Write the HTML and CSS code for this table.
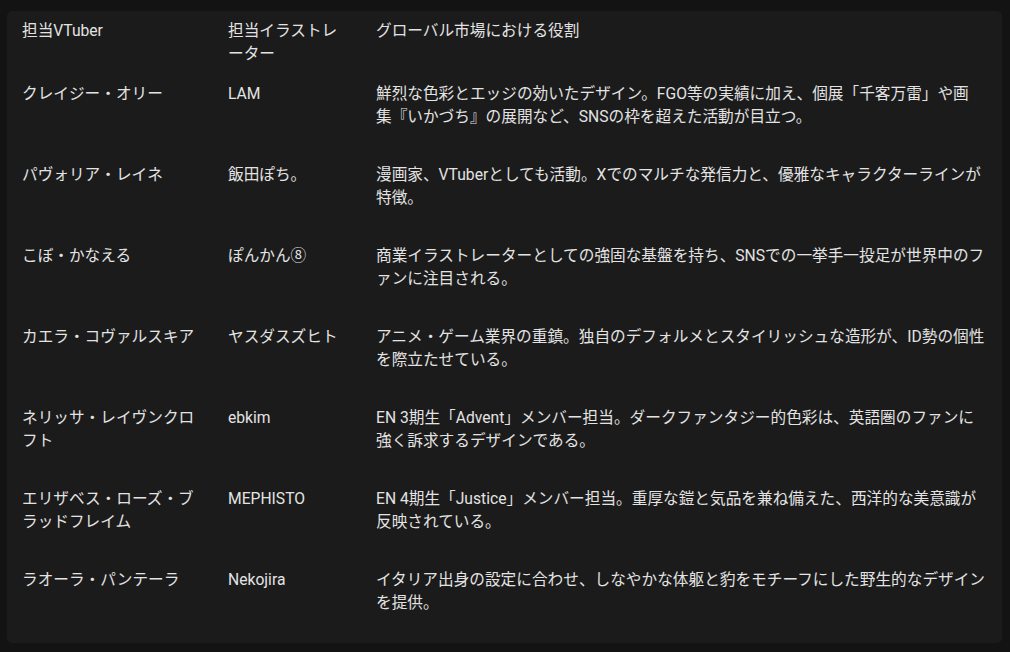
FILE: index.html
```html
<!DOCTYPE html>
<html lang="ja">
<head>
<meta charset="utf-8">
<title>担当イラストレーター</title>
<link rel="stylesheet" href="styles.css">
</head>
<body>
<div class="page">
  <div class="card">
    <table class="tbl">
      <colgroup>
        <col class="c1"><col class="c2"><col class="c3">
      </colgroup>
      <thead>
        <tr><th>担当VTuber</th><th>担当イラストレーター</th><th>グローバル市場における役割</th></tr>
      </thead>
      <tbody>
        <tr><td>クレイジー・オリー</td><td>LAM</td><td>鮮烈な色彩とエッジの効いたデザイン。FGO等の実績に加え、個展「千客万雷」や画<span class="nw">集『</span>いかづち』の展開など、SNSの枠を超えた活動が目立つ。</td></tr>
        <tr><td>パヴォリア・レイネ</td><td>飯田ぽち。</td><td>漫画家、VTuberとしても活動。Xでのマルチな発信力と、優雅なキャラクターラインが特徴。</td></tr>
        <tr><td>こぼ・かなえる</td><td>ぽんかん⑧</td><td>商業イラストレーターとしての強固な基盤を持ち、SNSでの一挙手一投足が世界中のファンに注目される。</td></tr>
        <tr><td>カエラ・コヴァルスキア</td><td>ヤスダスズヒト</td><td>アニメ・ゲーム業界の重鎮。独自のデフォルメとスタイリッシュな造形が、ID勢の個性を際立たせている。</td></tr>
        <tr><td>ネリッサ・レイヴンクロフト</td><td>ebkim</td><td>EN 3期生「Advent」メンバー担当。ダークファンタジー的色彩は、英語圏のファンに強く訴求するデザインである。</td></tr>
        <tr><td>エリザベス・ローズ・ブラッドフレイム</td><td>MEPHISTO</td><td>EN 4期生「Justice」メンバー担当。重厚な鎧と気品を兼ね備えた、西洋的な美意識が反映されている。</td></tr>
        <tr><td>ラオーラ・パンテーラ</td><td>Nekojira</td><td>イタリア出身の設定に合わせ、しなやかな体躯と豹をモチーフにした野生的なデザインを提供。</td></tr>
      </tbody>
    </table>
  </div>
</div>
</body>
</html>
```
FILE: styles.css
```css
html, body {
  margin: 0;
  padding: 0;
  background: #131313;
}
body {
  font-family: Roboto, "Noto Sans CJK JP", "Noto Sans", sans-serif;
  font-size: 15.66px;
  line-height: 23px;
  color: #e3e3e3;
}
.page {
  padding: 11px 8px 11px 7px;
}
.card {
  background: #1b1b1b;
  border-radius: 5px;
  padding: 0 14px 3px 3px;
}
.tbl {
  width: 100%;
  border-collapse: collapse;
  table-layout: fixed;
}
.c1 { width: 206px; }
.c2 { width: 148px; }
.tbl th {
  font-weight: 400;
  text-align: left;
  vertical-align: top;
  padding: 8px 12px 8px 12px;
}
.tbl th:last-child, .tbl td:last-child {
  padding-right: 0;
}
.tbl td {
  vertical-align: top;
  padding: 9px 12px 26px 12px;
}
.nw {
  white-space: nowrap;
}
```
